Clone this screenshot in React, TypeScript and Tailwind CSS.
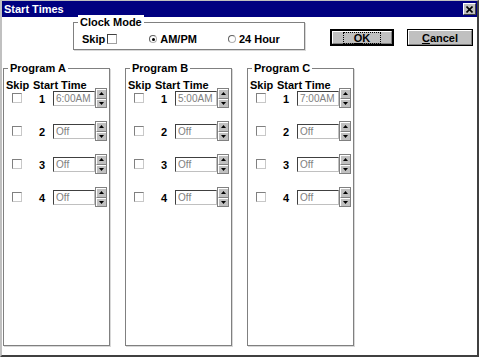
import React from "react";

const programs = [
  { name: "Program A", first: "6:00AM" },
  { name: "Program B", first: "5:00AM" },
  { name: "Program C", first: "7:00AM" },
];

function CheckBox({ dark }: { dark?: boolean }) {
  return (
    <span
      className={`block w-[10px] h-[10px] bg-white border ${
        dark
          ? "border-t-[#404040] border-l-[#404040] border-r-[#a0a0a0] border-b-[#a0a0a0]"
          : "border-t-[#808080] border-l-[#808080] border-r-[#c8c8c8] border-b-[#c8c8c8]"
      }`}
    />
  );
}

function Radio({ checked }: { checked?: boolean }) {
  return (
    <span className="flex items-center justify-center w-[8px] h-[8px] rounded-full border border-t-[#606060] border-l-[#606060] border-r-[#b0b0b0] border-b-[#b0b0b0] bg-white">
      {checked && <span className="block w-[3px] h-[3px] rounded-full bg-black" />}
    </span>
  );
}

function Spinner() {
  return (
    <div className="flex flex-col w-[12px] h-[20px] border border-[#808080]">
      <div className="flex-1 flex items-center justify-center bg-[#c0c0c0] border-t border-l border-t-white border-l-white border-b border-b-[#808080]">
        <svg width="5" height="3" viewBox="0 0 5 3">
          <path d="M2.5 0 L5 3 L0 3 Z" fill="#000" />
        </svg>
      </div>
      <div className="flex-1 flex items-center justify-center bg-[#c0c0c0] border-t border-l border-t-white border-l-white">
        <svg width="5" height="3" viewBox="0 0 5 3">
          <path d="M0 0 L5 0 L2.5 3 Z" fill="#000" />
        </svg>
      </div>
    </div>
  );
}

function GroupBox({ label, className, children }: { label: string; className: string; children?: React.ReactNode }) {
  return (
    <div className={`relative border border-[#808080] shadow-[1px_1px_0_#d8d8d8] ${className}`}>
      <span className="absolute -top-[8px] left-[4px] bg-white px-[2px] text-[11px] font-bold leading-[14px] text-black">
        {label}
      </span>
      {children}
    </div>
  );
}

function ProgramBox({ name, first }: { name: string; first: string }) {
  return (
    <GroupBox label={name} className="w-[107px] h-[278px] pt-[10px]">
      <div className="flex h-[13px] text-[11px] font-bold leading-[13px] pl-[2px]">
        <span className="w-[27px]">Skip</span>
        <span>Start Time</span>
      </div>
      <div className="flex flex-col gap-[13px] -mt-[4px]">
        {[1, 2, 3, 4].map((n) => (
          <div key={n} className="flex items-center h-[20px]">
            <span className="ml-[8px] w-[27px]">
              <CheckBox />
            </span>
            <span className="w-[14px] text-[11px] font-bold leading-[13px] pt-[2px]">{n}</span>
            <span className="flex items-center w-[42px] h-[15px] border border-t-[#404040] border-l-[#404040] border-r-[#c0c0c0] border-b-[#c0c0c0] bg-white pl-[2px] text-[10px] leading-[13px] text-[#808080] overflow-hidden whitespace-nowrap">
              {n === 1 ? first : "Off"}
            </span>
            <Spinner />
          </div>
        ))}
      </div>
    </GroupBox>
  );
}

export default function App() {
  return (
    <div
      className="w-[479px] h-[357px] bg-white flex flex-col border-t border-l-2 border-r-2 border-b-2 border-t-[#c0c0c0] border-l-[#c0c0c0] border-r-[#404040] border-b-[#404040] text-black"
      style={{ fontFamily: '"Liberation Sans", Arial, sans-serif' }}
    >
      <div className="h-[16px] bg-[#000080] flex items-center justify-between pl-[2px] pr-[1px]">
        <span className="text-white text-[11px] font-bold leading-[14px]">Start Times</span>
        <span className="flex items-center justify-center w-[13px] h-[12px] bg-[#c0c0c0] border border-t-white border-l-white border-r-[#404040] border-b-[#404040]">
          <svg width="7" height="7" viewBox="0 0 7 7">
            <path d="M0.5 0.5 L6.5 6.5 M6.5 0.5 L0.5 6.5" stroke="#000" strokeWidth="1.6" />
          </svg>
        </span>
      </div>

      <div className="flex items-start pl-[71px] mt-[5px]">
        <GroupBox label="Clock Mode" className="w-[232px] h-[28px]">
          <div className="flex items-center h-full pt-[6px] text-[11px] font-bold leading-[13px]">
            <span className="ml-[8px]">Skip</span>
            <span className="ml-[2px]">
              <CheckBox dark />
            </span>
            <span className="ml-[32px] flex items-center gap-[3px]">
              <Radio checked />
              AM/PM
            </span>
            <span className="ml-[31px] flex items-center gap-[3px]">
              <Radio />
              24 Hour
            </span>
          </div>
        </GroupBox>

        <button className="ml-[25px] mt-[7px] w-[64px] h-[17px] border-2 border-black bg-[#c0c0c0] p-0 flex">
          <span className="flex-1 flex items-center justify-center border border-t-white border-l-white border-r-[#808080] border-b-[#808080]">
            <span className="px-[10px] border border-dotted border-black text-[11px] font-bold leading-[10px]">
              <span className="underline">O</span>K
            </span>
          </span>
        </button>
        <button className="ml-[13px] mt-[7px] w-[66px] h-[17px] border border-black bg-[#c0c0c0] p-0 flex">
          <span className="flex-1 flex items-center justify-center border border-t-white border-l-white border-r-[#808080] border-b-[#808080] text-[11px] font-bold leading-[12px]">
            <span>
              <span className="underline">C</span>ancel
            </span>
          </span>
        </button>
      </div>

      <div className="flex gap-[15px] pl-[1px] mt-[18px]">
        {programs.map((p) => (
          <ProgramBox key={p.name} name={p.name} first={p.first} />
        ))}
      </div>
    </div>
  );
}
